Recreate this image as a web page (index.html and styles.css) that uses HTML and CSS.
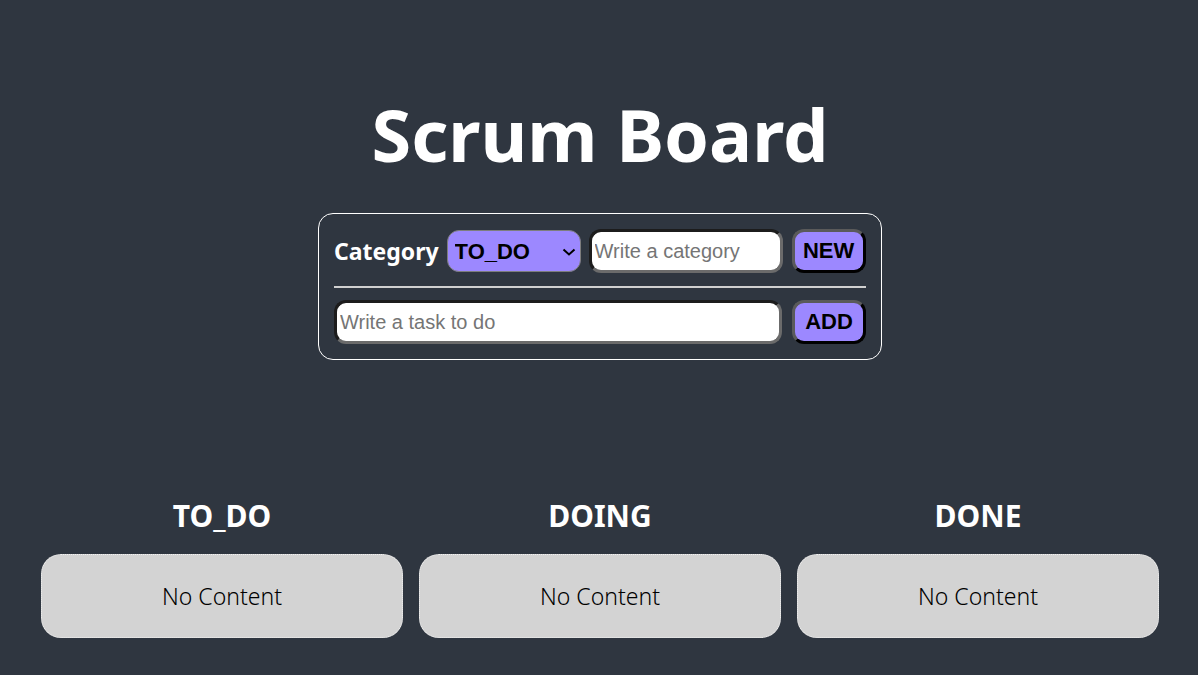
FILE: index.html
```html
<!DOCTYPE html>
<html lang="ko">
<head>
<meta charset="utf-8">
<title>Scrum Board</title>
<link rel="stylesheet" href="styles.css">
</head>
<body>
<main class="page">
  <h1 class="title">Scrum Board</h1>
  <section class="panel">
    <form class="row">
      <label class="label" for="cat">Category</label>
      <span class="select-wrap">
        <select id="cat" class="select">
          <option>TO_DO</option>
          <option>DOING</option>
          <option>DONE</option>
        </select>
        <svg class="chevron" width="14" height="8" viewBox="0 0 14 8" aria-hidden="true">
          <path d="M1.5 1.5 L7 6.5 L12.5 1.5" fill="none" stroke="#000" stroke-width="2"/>
        </svg>
      </span>
      <input class="input input-cat" type="text" placeholder="Write a category">
      <button class="btn" type="button">NEW</button>
    </form>
    <hr class="divider">
    <form class="row row-task">
      <input class="input input-task" type="text" placeholder="Write a task to do">
      <button class="btn" type="button">ADD</button>
    </form>
  </section>
  <section class="board">
    <div class="column">
      <h2 class="col-title">TO_DO</h2>
      <div class="card">No Content</div>
    </div>
    <div class="column">
      <h2 class="col-title">DOING</h2>
      <div class="card">No Content</div>
    </div>
    <div class="column">
      <h2 class="col-title">DONE</h2>
      <div class="card">No Content</div>
    </div>
  </section>
</main>
</body>
</html>
```

FILE: styles.css
```css
* { box-sizing: border-box; }
html, body { margin: 0; padding: 0; }
body {
  background: #2f3640;
  color: #fff;
  font-family: "Noto Sans", "Noto Sans CJK KR", sans-serif;
  height: 675px;
  overflow: hidden;
}
.page {
  display: flex;
  flex-direction: column;
  align-items: center;
  padding-top: 84px;
  padding-left: 2px;
}
.title {
  margin: 0;
  font-size: 72px;
  font-weight: 700;
  line-height: 100px;
}
.panel {
  margin-top: 29px;
  width: 564px;
  border: 1px solid #fff;
  border-radius: 15px;
  padding: 15px;
}
.row {
  display: flex;
  align-items: center;
  margin: 0;
}
.label {
  font-size: 23px;
  font-weight: 700;
  margin-right: 8px;
}
.select-wrap {
  position: relative;
  display: inline-flex;
  margin-right: 8px;
}
.select {
  appearance: none;
  -webkit-appearance: none;
  width: 134px;
  height: 42px;
  background: #9c88ff;
  border: 1px solid #7d7d7d;
  border-radius: 12px;
  font-family: "Liberation Sans", Arial, sans-serif;
  font-weight: 700;
  font-size: 22px;
  color: #000;
  padding: 0 0 0 7px;
}
.chevron {
  position: absolute;
  right: 5px;
  top: 18px;
  pointer-events: none;
}
.input {
  height: 44px;
  border-radius: 12px;
  border: 3px solid;
  border-color: #1c1c1c #6b6b6b #6b6b6b #1c1c1c;
  background: #fff;
  font-family: "Liberation Sans", Arial, sans-serif;
  font-size: 20px;
  padding: 0 3px;
  color: #000;
}
.input::placeholder { color: #757575; }
.input-cat { width: 194px; margin-right: 9px; }
.input-task { width: 449px; margin-right: 10px; }
.btn {
  width: 74px;
  height: 44px;
  border-radius: 12px;
  border: 3px solid;
  border-color: #5a5a5a #000 #000 #5a5a5a;
  background: #9c88ff;
  color: #000;
  font-family: "Liberation Sans", Arial, sans-serif;
  font-weight: 700;
  font-size: 22px;
  padding: 0;
}
.divider {
  border: 0;
  border-top: 2px solid #d0d0d0;
  margin: 13px 0 12px;
}
.board {
  margin-top: 136px;
  width: 100%;
  padding: 0 39px 0 39px;
  display: grid;
  grid-template-columns: repeat(3, 1fr);
  gap: 16px;
}
.column {
  display: flex;
  flex-direction: column;
  align-items: center;
}
.col-title {
  margin: 0 0 18px;
  font-size: 30px;
  font-weight: 700;
  line-height: 40px;
}
.card {
  width: 100%;
  height: 84px;
  background: #d3d3d3;
  border: 1px dotted #f2f2f2;
  border-radius: 20px;
  color: #000;
  font-size: 23px;
  font-weight: 300;
  display: flex;
  align-items: center;
  justify-content: center;
}
```
